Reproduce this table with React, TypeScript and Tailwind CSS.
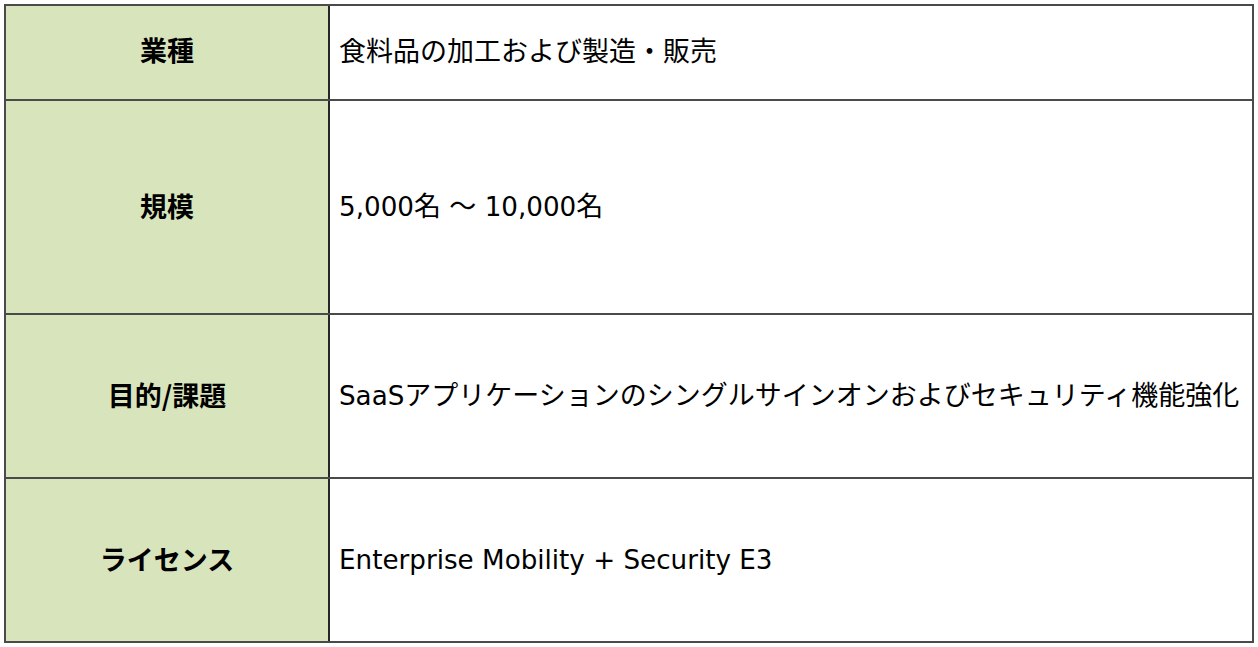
import React from "react";

type Part = { t: string; l?: boolean };
const rows: { label: string; value: Part[]; h: string; off: string }[] = [
  { label: "業種", value: [{ t: "食料品の加工および製造・販売" }], h: "h-[95px]", off: "-mt-[6px]" },
  {
    label: "規模",
    value: [{ t: "5,000", l: true }, { t: "名" }, { t: " ", l: true }, { t: "～" }, { t: " 10,000", l: true }, { t: "名" }],
    h: "h-[214px]",
    off: "-mt-[3px]",
  },
  {
    label: "目的/課題",
    value: [{ t: "SaaS", l: true }, { t: "アプリケーションのシングルサインオンおよびセキュリティ機能強化" }],
    h: "h-[164px]",
    off: "-mt-[3px]",
  },
  { label: "ライセンス", value: [{ t: "Enterprise Mobility + Security E3", l: true }], h: "h-[164px]", off: "-mt-[3px]" },
];

export default function App() {
  return (
    <div className="w-[1258px] h-[647px] bg-white pt-[4px] pl-[4px]" style={{ fontFamily: '"Noto Sans CJK JP", sans-serif' }}>
      <div className="w-[1250px] border-t-2 border-l-2 border-r-2 border-[#4a4a4a]">
        {rows.map((r, i) => (
          <div key={i} className={`flex ${r.h} border-b-2 border-[#4a4a4a]`}>
            <div className="w-[324px] shrink-0 bg-[#d8e4bc] border-r-2 border-[#262626] flex items-center justify-center">
              <span className={`text-[27px] font-bold text-black leading-none ${r.off}`}>{r.label}</span>
            </div>
            <div className="flex-1 flex items-center pl-[9px] whitespace-nowrap">
              <span className={`text-[27px] text-black leading-none ${r.off}`}>
                {r.value.map((p, j) =>
                  p.l ? (
                    <span key={j} className="text-[26.2px] whitespace-pre" style={{ fontFamily: '"DejaVu Sans", sans-serif' }}>
                      {p.t}
                    </span>
                  ) : (
                    <span key={j}>{p.t}</span>
                  )
                )}
              </span>
            </div>
          </div>
        ))}
      </div>
    </div>
  );
}
